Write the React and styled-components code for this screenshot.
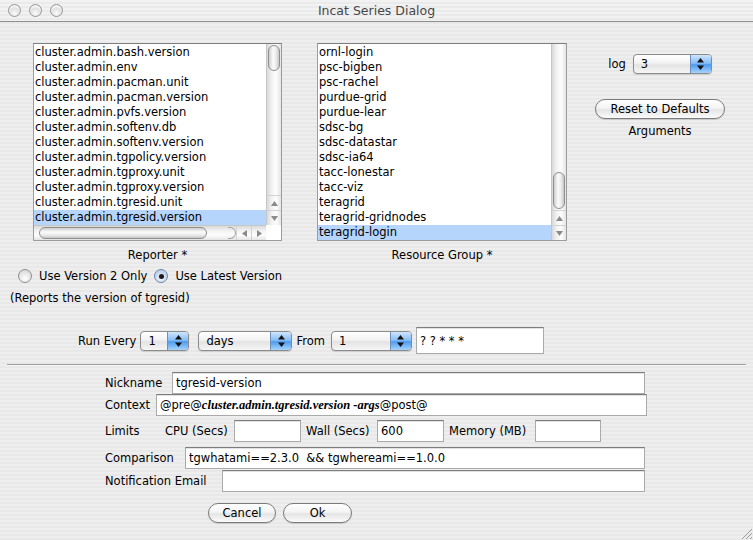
import React from 'react';
import styled, { createGlobalStyle } from 'styled-components';

const GlobalStyle = createGlobalStyle`
    html, body {
        margin: 0;
        padding: 0;
    }
    body {
        font-family: "DejaVu Sans", "Liberation Sans", sans-serif;
        font-size: 11.5px;
        color: #000;
        background: #ececec;
    }
`;

const stripes = `repeating-linear-gradient(to bottom, #eeeeee 0px, #eeeeee 2px, #e8e8e8 2px, #e8e8e8 4px)`;

const Window = styled.div`
    position: relative;
    width: 753px;
    height: 540px;
    overflow: hidden;
    background: ${stripes};
    display: flex;
    flex-direction: column;
`;

const TitleBar = styled.div`
    height: 21px;
    flex: none;
    border-bottom: 1px solid #8e8e8e;
    display: grid;
    grid-template-columns: 1fr auto 1fr;
    align-items: center;
    background: repeating-linear-gradient(to bottom, #f2f2f2 0px, #f2f2f2 2px, #eaeaea 2px, #eaeaea 4px);
`;

const Lights = styled.div`
    display: flex;
    gap: 8px;
    padding-left: 8px;
`;

const Light = styled.span`
    width: 13px;
    height: 13px;
    box-sizing: border-box;
    border-radius: 50%;
    border: 1px solid #979797;
    background: radial-gradient(circle at 50% 75%, #fbfbfb 0%, #e2e2e2 45%, #c4c4c4 100%);
    box-shadow: inset 0 2px 2px rgba(255, 255, 255, 0.9);
`;

const Title = styled.div`
    font-size: 12.5px;
    color: #474747;
`;

const Top = styled.div`
    display: flex;
    padding: 21px 0 0 33px;
`;

const ListColumn = styled.div`
    width: ${p => p.$w}px;
    margin-left: ${p => p.$ml || 0}px;
    display: flex;
    flex-direction: column;
`;

const ListBox = styled.div`
    height: 198px;
    box-sizing: border-box;
    border: 1px solid #9c9c9c;
    border-top-color: #7e7e7e;
    background: #fff;
    display: grid;
    grid-template-columns: 1fr 15px;
    grid-template-rows: ${p => (p.$hscroll ? '1fr 15px' : '1fr')};
    overflow: hidden;
`;

const Rows = styled.div`
    overflow: hidden;
    padding-top: 1px;
`;

const Row = styled.div`
    height: 15px;
    line-height: 15px;
    padding-left: 1px;
    white-space: nowrap;
    background: ${p => (p.$selected ? '#b6d5fd' : 'transparent')};
`;

const VTrack = styled.div`
    display: flex;
    flex-direction: column;
    box-sizing: border-box;
    border-left: 1px solid #c6c6c6;
    background: linear-gradient(to right, #d9d9d9, #f3f3f3 35%, #fdfdfd 65%, #e4e4e4);
`;

const VThumb = styled.div`
    margin: ${p => p.$top}px 1px 0 1px;
    height: ${p => p.$size}px;
    flex: none;
    box-sizing: border-box;
    border: 1px solid #8f8f8f;
    border-radius: 7px;
    background: linear-gradient(to right, #cdcdcd, #fbfbfb 40%, #ececec 70%, #c6c6c6);
`;

const Fill = styled.div`
    flex: 1;
`;

const ArrowCell = styled.div`
    height: 15px;
    width: 15px;
    flex: none;
    display: flex;
    align-items: center;
    justify-content: center;
    box-sizing: border-box;
    border-${p => (p.$h ? 'left' : 'top')}: 1px solid #d2d2d2;
`;

const HTrack = styled.div`
    display: flex;
    box-sizing: border-box;
    border-top: 1px solid #c6c6c6;
    background: linear-gradient(to bottom, #d9d9d9, #f3f3f3 35%, #fdfdfd 65%, #e4e4e4);
`;

const HThumb = styled.div`
    margin: 1px 0 1px ${p => p.$left}px;
    width: ${p => p.$size}px;
    flex: none;
    box-sizing: border-box;
    border: 1px solid #8f8f8f;
    border-radius: 7px;
    background: linear-gradient(to bottom, #cdcdcd, #fbfbfb 40%, #ececec 70%, #c6c6c6);
`;

const TrackCap = styled.div`
    width: 8px;
    margin: 1px 0 1px 0;
    flex: none;
    box-sizing: border-box;
    border: 1px solid #a5a5a5;
    border-left: none;
    border-radius: 0 7px 7px 0;
`;

const Corner = styled.div`
    background: #fff;
`;

const Caption = styled.div`
    margin-top: 7px;
    text-align: center;
    line-height: 14px;
`;

const Controls = styled.div`
    width: 130px;
    margin-left: 28px;
    padding-top: 11px;
    display: flex;
    flex-direction: column;
    align-items: center;
`;

const Inline = styled.div`
    display: flex;
    align-items: center;
    gap: ${p => p.$gap || 0}px;
    height: 20px;
`;

const Popup = styled.div`
    display: flex;
    flex: none;
    width: ${p => p.$w}px;
    height: 20px;
    box-sizing: border-box;
    border: 1px solid #8b8b8b;
    border-radius: 4px;
    overflow: hidden;
    background: linear-gradient(#ffffff, #f2f2f2 45%, #e3e3e3 55%, #f6f6f6);
    box-shadow: 0 1px 1px rgba(0, 0, 0, 0.12);
`;

const PopupText = styled.span`
    flex: 1;
    padding-left: 7px;
    line-height: 18px;
`;

const Stepper = styled.span`
    width: 20px;
    display: flex;
    align-items: center;
    justify-content: center;
    border-left: 1px solid #6c8fbd;
    background: linear-gradient(#cfe5fc, #86bdf5 46%, #4e9bef 54%, #a6d3fc);
`;

const PillButton = styled.div`
    width: ${p => p.$w}px;
    height: 20px;
    box-sizing: border-box;
    border: 1px solid #7b7b7b;
    border-radius: 10px;
    display: flex;
    align-items: center;
    justify-content: center;
    background: linear-gradient(#ffffff, #f4f4f4 45%, #e4e4e4 55%, #fbfbfb);
    box-shadow: 0 1px 1px rgba(0, 0, 0, 0.15);
`;

const ResetWrap = styled.div`
    margin-top: 25px;
`;

const ArgsLabel = styled.div`
    margin-top: 5px;
    line-height: 14px;
`;

const RadioRow = styled.div`
    display: flex;
    align-items: center;
    margin-top: 6px;
    padding-left: 18px;
    height: 16px;
`;

const Radio = styled.span`
    width: 14px;
    height: 14px;
    flex: none;
    box-sizing: border-box;
    border-radius: 50%;
    border: 1px solid ${p => (p.$on ? '#6b86ad' : '#8e8e8e')};
    background: ${p => (p.$on
        ? 'radial-gradient(circle at 50% 70%, #eef4fb, #b8cde8 80%)'
        : 'radial-gradient(circle at 50% 70%, #ffffff, #d6d6d6 85%)')};
    display: flex;
    align-items: center;
    justify-content: center;
    margin-right: 7px;
    &::after {
        content: '';
        width: 5px;
        height: 5px;
        border-radius: 50%;
        background: ${p => (p.$on ? '#1b1b1b' : 'transparent')};
    }
`;

const RadioText = styled.span`
    margin-right: 7px;
`;

const Note = styled.div`
    margin-top: 7px;
    padding-left: 10px;
    line-height: 14px;
`;

const RunRow = styled.div`
    display: flex;
    align-items: center;
    margin-top: 22px;
    padding-left: 78px;
    height: 27px;
`;

const RunLabel = styled.span`
    margin: 0 ${p => p.$mr ?? 4}px 0 ${p => p.$ml || 0}px;
`;

const Field = styled.input`
    box-sizing: border-box;
    width: ${p => (p.$w ? `${p.$w}px` : 'auto')};
    flex: ${p => (p.$w ? 'none' : '1')};
    min-width: 0;
    height: ${p => p.$h || 22}px;
    margin: 0;
    padding: 0 3px;
    font: inherit;
    color: #000;
    background: #fff;
    border: 1px solid #aaaaaa;
    border-top-color: #7d7d7d;
    box-shadow: inset 0 1px 0 #e2e2e2;
    outline: none;
    border-radius: 0;
`;

const FieldBox = styled.div`
    box-sizing: border-box;
    flex: 1;
    height: 22px;
    margin-right: -2px;
    padding: 0 3px;
    display: flex;
    align-items: center;
    white-space: nowrap;
    background: #fff;
    border: 1px solid #aaaaaa;
    border-top-color: #7d7d7d;
    box-shadow: inset 0 1px 0 #e2e2e2;
`;

const Script = styled.span`
    font-family: "Liberation Serif", "Times New Roman", serif;
    font-weight: bold;
    font-style: italic;
    font-size: 12.5px;
`;

const Separator = styled.div`
    margin: 10px 7px 0 7px;
    height: 1px;
    background: #9d9d9d;
    border-bottom: 1px solid #f8f8f8;
`;

const Form = styled.div`
    padding: 6px 108px 0 105px;
    display: flex;
    flex-direction: column;
`;

const FormRow = styled.div`
    display: flex;
    align-items: center;
    height: 22px;
    margin-top: ${p => p.$mt || 0}px;
`;

const Label = styled.span`
    width: ${p => p.$w}px;
    flex: none;
    padding-left: ${p => p.$pl || 0}px;
    box-sizing: border-box;
    white-space: nowrap;
`;

const Buttons = styled.div`
    display: flex;
    gap: 7px;
    margin-top: 11px;
    padding-left: 208px;
`;

const Grip = styled.svg`
    position: absolute;
    right: 0;
    bottom: 0;
`;

const reporters = [
    'cluster.admin.bash.version',
    'cluster.admin.env',
    'cluster.admin.pacman.unit',
    'cluster.admin.pacman.version',
    'cluster.admin.pvfs.version',
    'cluster.admin.softenv.db',
    'cluster.admin.softenv.version',
    'cluster.admin.tgpolicy.version',
    'cluster.admin.tgproxy.unit',
    'cluster.admin.tgproxy.version',
    'cluster.admin.tgresid.unit',
    'cluster.admin.tgresid.version',
];

const groups = [
    'ornl-login',
    'psc-bigben',
    'psc-rachel',
    'purdue-grid',
    'purdue-lear',
    'sdsc-bg',
    'sdsc-datastar',
    'sdsc-ia64',
    'tacc-lonestar',
    'tacc-viz',
    'teragrid',
    'teragrid-gridnodes',
    'teragrid-login',
];

const Tri = ({ dir }) => {
    const pts = {
        up: '0,5 3.5,0 7,5',
        down: '0,0 7,0 3.5,5',
        left: '5,0 5,7 0,3.5',
        right: '0,0 5,3.5 0,7',
    }[dir];
    const horiz = dir === 'left' || dir === 'right';
    return (
        <svg width={horiz ? 5 : 7} height={horiz ? 7 : 5}>
            <polygon points={pts} fill="#8a8a8a" />
        </svg>
    );
};

const StepArrows = () => (
    <svg width="7" height="12" viewBox="0 0 7 12">
        <polygon points="0,4.5 3.5,0 7,4.5" fill="#111" />
        <polygon points="0,7.5 7,7.5 3.5,12" fill="#111" />
    </svg>
);

const Select = ({ w, value }) => (
    <Popup $w={w}>
        <PopupText>{value}</PopupText>
        <Stepper>
            <StepArrows />
        </Stepper>
    </Popup>
);

const VScroll = ({ top, size }) => (
    <VTrack>
        <VThumb $top={top} $size={size} />
        <Fill />
        <ArrowCell><Tri dir="up" /></ArrowCell>
        <ArrowCell><Tri dir="down" /></ArrowCell>
    </VTrack>
);

const App = () => {
    return (
        <>
            <GlobalStyle />
            <Window>
                <TitleBar>
                    <Lights>
                        <Light />
                        <Light />
                        <Light />
                    </Lights>
                    <Title>Incat Series Dialog</Title>
                    <div />
                </TitleBar>

                <Top>
                    <ListColumn $w={249}>
                        <ListBox $hscroll>
                            <Rows>
                                {reporters.map((r, i) => (
                                    <Row key={r} $selected={i === reporters.length - 1}>{r}</Row>
                                ))}
                            </Rows>
                            <VScroll top={1} size={26} />
                            <HTrack>
                                <HThumb $left={5} $size={168} />
                                <Fill />
                                <TrackCap />
                                <ArrowCell $h><Tri dir="left" /></ArrowCell>
                                <ArrowCell $h><Tri dir="right" /></ArrowCell>
                            </HTrack>
                            <Corner />
                        </ListBox>
                        <Caption>Reporter *</Caption>
                    </ListColumn>

                    <ListColumn $w={250} $ml={35}>
                        <ListBox>
                            <Rows>
                                {groups.map((g, i) => (
                                    <Row key={g} $selected={i === groups.length - 1}>{g}</Row>
                                ))}
                            </Rows>
                            <VScroll top={128} size={37} />
                        </ListBox>
                        <Caption>Resource Group *</Caption>
                    </ListColumn>

                    <Controls>
                        <Inline $gap={7}>
                            <span>log</span>
                            <Select w={79} value="3" />
                        </Inline>
                        <ResetWrap>
                            <PillButton $w={130}>Reset to Defaults</PillButton>
                        </ResetWrap>
                        <ArgsLabel>Arguments</ArgsLabel>
                    </Controls>
                </Top>

                <RadioRow>
                    <Radio />
                    <RadioText>Use Version 2 Only</RadioText>
                    <Radio $on />
                    <RadioText>Use Latest Version</RadioText>
                </RadioRow>
                <Note>(Reports the version of tgresid)</Note>

                <RunRow>
                    <RunLabel>Run Every</RunLabel>
                    <Select w={49} value="1" />
                    <RunLabel $ml={9} $mr={0} />
                    <Select w={94} value="days" />
                    <RunLabel $ml={4} $mr={6}>From</RunLabel>
                    <Select w={81} value="1" />
                    <RunLabel $mr={4} />
                    <Field $w={128} $h={27} readOnly value="? ? * * *" />
                </RunRow>

                <Separator />

                <Form>
                    <FormRow>
                        <Label $w={67}>Nickname</Label>
                        <Field readOnly value="tgresid-version" />
                    </FormRow>
                    <FormRow>
                        <Label $w={51}>Context</Label>
                        <FieldBox>
                            @pre@<Script>cluster.admin.tgresid.version -args</Script>@post@
                        </FieldBox>
                    </FormRow>
                    <FormRow $mt={4}>
                        <Label $w={60}>Limits</Label>
                        <Label $w={69}>CPU (Secs)</Label>
                        <Field $w={67} readOnly value="" />
                        <Label $w={76} $pl={5}>Wall (Secs)</Label>
                        <Field $w={67} readOnly value="600" />
                        <Label $w={91} $pl={5}>Memory (MB)</Label>
                        <Field $w={66} readOnly value="" />
                    </FormRow>
                    <FormRow $mt={5}>
                        <Label $w={80}>Comparison</Label>
                        <Field readOnly value="tgwhatami==2.3.0  && tgwhereami==1.0.0" />
                    </FormRow>
                    <FormRow $mt={1}>
                        <Label $w={117}>Notification Email</Label>
                        <Field readOnly value="" />
                    </FormRow>
                </Form>

                <Buttons>
                    <PillButton $w={68}>Cancel</PillButton>
                    <PillButton $w={69}>Ok</PillButton>
                </Buttons>

                <Grip width="15" height="15" viewBox="0 0 15 15">
                    <line x1="14" y1="4" x2="4" y2="14" stroke="#9a9a9a" />
                    <line x1="14" y1="8" x2="8" y2="14" stroke="#9a9a9a" />
                    <line x1="14" y1="12" x2="12" y2="14" stroke="#9a9a9a" />
                </Grip>
            </Window>
        </>
    );
};

export default App;
